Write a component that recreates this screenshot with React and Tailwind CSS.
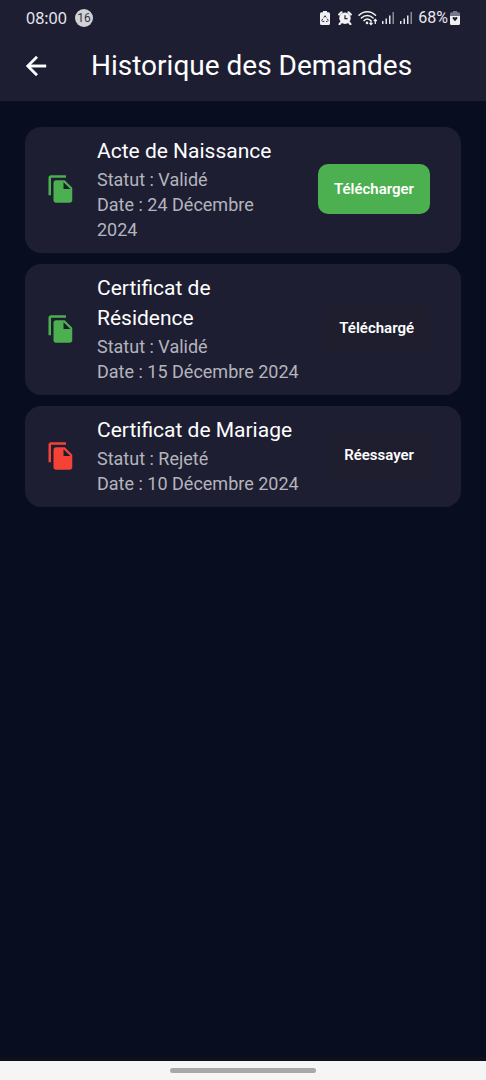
import React from "react";

const requests = [
  {
    title: "Acte de Naissance",
    status: "Validé",
    date: "24 Décembre 2024",
    action: "Télécharger",
    icon: "text-[#4caf50]",
    button: "bg-[#4caf50]",
  },
  {
    title: "Certificat de Résidence",
    status: "Validé",
    date: "15 Décembre 2024",
    action: "Téléchargé",
    icon: "text-[#4caf50]",
    button: "bg-[#1e1e2f]",
  },
  {
    title: "Certificat de Mariage",
    status: "Rejeté",
    date: "10 Décembre 2024",
    action: "Réessayer",
    icon: "text-[#f44336]",
    button: "bg-[#1e1e2f]",
  },
];

function FileCopyIcon({ className }) {
  return (
    <svg viewBox="0 0 24 24" className={className} fill="currentColor" aria-hidden="true">
      <path d="M16 1H4c-1.1 0-2 .9-2 2v14h2V3h12V1zm-1 4 6 6v10c0 1.1-.9 2-2 2H7.990C6.890 23 6 22.100 6 21l.010-14c0-1.100.890-2 1.990-2H15zm-1 7h5.500L14 6.500V12z" />
    </svg>
  );
}

function BackIcon() {
  return (
    <svg viewBox="0 0 24 24" className="size-[30px]" fill="currentColor" stroke="currentColor" strokeWidth="0.3" aria-hidden="true">
      <path d="M20 11H7.830l5.590-5.590L12 4l-8 8 8 8 1.410-1.410L7.830 13H20v-2z" />
    </svg>
  );
}

function RecycleBatteryIcon() {
  return (
    <svg viewBox="0 0 10 14" className="h-[14px] w-[10px]" aria-hidden="true">
      <path d="M3 0h4v1.200h1.500A1.500 1.500 0 0 1 10 2.700v9.800A1.500 1.500 0 0 1 8.500 14h-7A1.500 1.500 0 0 1 0 12.500V2.700a1.500 1.500 0 0 1 1.500-1.500H3z" fill="#f1f1f4" />
      <path d="M3.700 6.600 5 4.700l1.300 1.900M7.300 7.800l.9 1.700-1 1H6M4.300 10.500H2.600l-.8-1 .9-1.700" fill="none" stroke="#1e1e32" strokeWidth="0.9" />
    </svg>
  );
}

function AlarmIcon() {
  return (
    <svg viewBox="0 0 14 14" className="size-[14px]" aria-hidden="true">
      <path d="M1.200 3.500 3.500 1.300M12.800 3.500 10.500 1.300M2.900 11.500l-1.300 1.600M11.100 11.500l1.300 1.600" stroke="#f1f1f4" strokeWidth="2.200" strokeLinecap="round" />
      <circle cx="7" cy="7.300" r="5.700" fill="#f1f1f4" />
      <path d="M7 4.300v3.300h2.500" fill="none" stroke="#1e1e32" strokeWidth="1.200" />
    </svg>
  );
}

function WifiIcon() {
  return (
    <svg viewBox="0 0 20 16" className="h-[16px] w-[20px]" fill="none" stroke="#f1f1f4" aria-hidden="true">
      <path d="M1 5.300C5.500.500 13 .500 17.500 5.300M3.400 8c3.300-3.400 8.400-3.400 11.700 0M6 10.600c1.900-1.800 4.600-1.800 6.500-.2" strokeWidth="1.500" strokeLinecap="round" />
      <circle cx="9" cy="12.900" r="1.300" fill="#f1f1f4" stroke="none" />
      <path d="M13 10v4.500M11.500 13l1.500 1.700 1.500-1.700M17.300 14V9.500M15.800 11l1.500-1.700 1.500 1.700" strokeWidth="1.200" />
    </svg>
  );
}

function SignalIcon() {
  return (
    <svg viewBox="0 0 12 13" className="h-[13px] w-[12px]" aria-hidden="true">
      <path d="M0 10h1.500v3H0zM3.500 7.500H5V13H3.500zM7 4.500h1.500V13H7z" fill="#e4e4ea" />
      <path d="M10.500 1H12v12h-1.500z" fill="#8b8b98" />
    </svg>
  );
}

function BatteryIcon() {
  return (
    <svg viewBox="0 0 10 14" className="h-[14px] w-[10px]" aria-hidden="true">
      <path d="M3 0h4v1.200h1.500A1.500 1.500 0 0 1 10 2.700V5H0V2.700a1.500 1.500 0 0 1 1.500-1.500H3z" fill="#77778a" />
      <path d="M0 5h10v7.500A1.500 1.500 0 0 1 8.500 14h-7A1.500 1.500 0 0 1 0 12.500z" fill="#f1f1f4" />
      <path d="M5 10.300 2.600 7.500c-.5-1.500 1.500-2.200 2.400-.8.900-1.400 2.900-.7 2.400.8z" fill="#1e1e32" />
    </svg>
  );
}

function StatusBar() {
  return (
    <div className="flex h-[35px] items-center justify-between px-[26px] text-[#e8e8ee]">
      <div className="flex items-center gap-2">
        <span className="font-['Noto_Sans',sans-serif] text-[16px] leading-5">08:00</span>
        <span className="flex size-[18px] items-center justify-center rounded-full bg-[#d2d2d6] text-[12px] leading-[18px] text-[#33333f]">
          16
        </span>
      </div>
      <div className="flex items-center gap-[6px]">
        <div className="flex items-center gap-2">
          <RecycleBatteryIcon />
          <AlarmIcon />
        </div>
        <div className="flex items-center gap-1">
          <WifiIcon />
          <SignalIcon />
        </div>
        <SignalIcon />
        <div className="flex items-center gap-[2px]">
          <span className="font-[Roboto,sans-serif] text-[16px] leading-5">68%</span>
          <BatteryIcon />
        </div>
      </div>
    </div>
  );
}

function RequestCard({ item }) {
  return (
    <li className="flex items-center rounded-2xl bg-[#1e1e32] pt-[9px] pr-[31px] pb-[11px] pl-[21px]">
      <FileCopyIcon className={`size-[30px] shrink-0 ${item.icon}`} />
      <div className="ml-[21px] min-w-0 flex-1">
        <h2 className="mb-px text-[21px] leading-[30px] text-white">{item.title}</h2>
        <p className="text-[18px] leading-[25px] text-[#b4b4bd]">{`Statut : ${item.status}`}</p>
        <p className="text-[18px] leading-[25px] text-[#b4b4bd]">{`Date : ${item.date}`}</p>
      </div>
      <button
        type="button"
        className={`ml-[22px] h-[50px] shrink-0 rounded-[10px] px-4 text-[15px] font-semibold text-white ${item.button}`}
      >
        {item.action}
      </button>
    </li>
  );
}

export default function App() {
  return (
    <div className="flex min-h-screen flex-col bg-[#080d1f] font-[Roboto,sans-serif]">
      <header className="bg-[#1e1e32] text-white">
        <StatusBar />
        <div className="flex h-[66px] items-start pl-[21px]">
          <button type="button" aria-label="Retour" className="mt-4">
            <BackIcon />
          </button>
          <h1 className="ml-10 pt-[13px] text-[28px] leading-9">Historique des Demandes</h1>
        </div>
      </header>
      <main className="flex-1 px-[25px] pt-[26px]">
        <ul className="flex flex-col gap-[11px]">
          {requests.map((item) => (
            <RequestCard key={item.title} item={item} />
          ))}
        </ul>
      </main>
      <footer className="flex h-[23px] justify-center border-t-4 border-[#10101a] bg-[#f5f5f5] pt-[7px]">
        <div className="h-[5px] w-[146px] rounded-full bg-[#a8a8a8]" />
      </footer>
    </div>
  );
}
